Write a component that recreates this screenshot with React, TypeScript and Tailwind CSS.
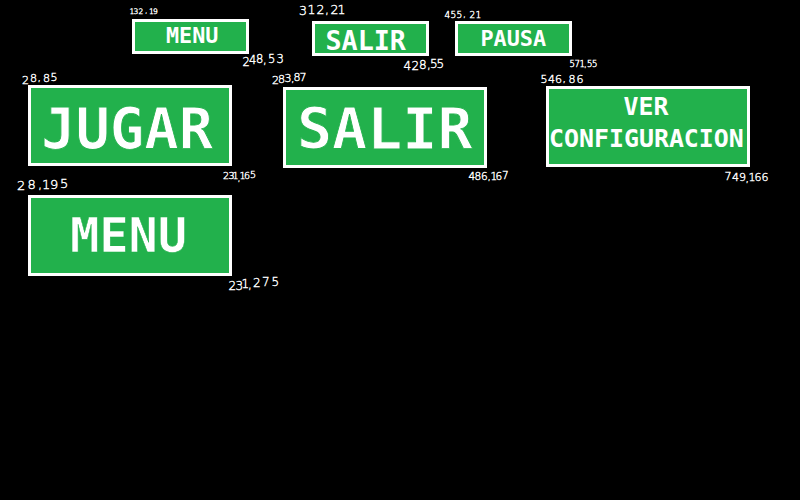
type Note = { text: string; size: number; x: number[]; y: number[] };

// Corner coordinates jotted next to every button, one position per character.
const notes: Note[] = [
  { text: "132,19", size: 7.5, x: [129.5, 133.5, 138.5, 145, 149, 153], y: [13.5, 13.5, 13.5, 13, 13.5, 13.5] },
  { text: "248,53", size: 11.5, x: [242.5, 249, 256, 263, 268, 276.5], y: [66, 63.5, 62.5, 64, 62.5, 62.5] },
  { text: "312,21", size: 12.5, x: [299, 307.5, 316.5, 325, 330.5, 337.5], y: [14.5, 13.5, 14, 14, 14, 14] },
  { text: "428,55", size: 12, x: [403.5, 411.5, 419, 427, 430, 436.5], y: [70, 69.5, 69, 69, 68, 68] },
  { text: "455,21", size: 9, x: [444.5, 450.5, 456.5, 463, 469.5, 475.5], y: [17.5, 18, 18, 17, 18, 18] },
  { text: "571,55", size: 8.5, x: [569.5, 574.5, 579.5, 584, 587, 592], y: [66.5, 67, 66.5, 67, 67, 66.5] },
  { text: "28,85", size: 11, x: [22, 30, 37.5, 43, 50.5], y: [83.5, 82, 81, 82, 80.5] },
  { text: "231,165", size: 9.5, x: [223, 228.5, 232.5, 237.5, 239.5, 244, 250], y: [178.5, 179, 179, 181, 179, 178.5, 178] },
  { text: "283,87", size: 11, x: [272, 278, 284.5, 291, 293.5, 299.5], y: [83.5, 82.5, 82, 82, 81, 81] },
  { text: "486,167", size: 10.5, x: [468.5, 474.5, 481, 487.5, 490.5, 495.5, 502], y: [179.5, 180, 180, 179.5, 180, 179.5, 179] },
  { text: "546,86", size: 11, x: [540.5, 548, 555, 562.5, 568.5, 576.5], y: [82.5, 82.5, 82.5, 82, 83, 82.5] },
  { text: "749,166", size: 11, x: [724.5, 732, 739, 745.5, 748.5, 754.5, 761.5], y: [180, 180.5, 181, 182, 181, 180.5, 180.5] },
  { text: "28,195", size: 13, x: [17, 27.5, 38, 42, 50, 60], y: [190, 189, 189, 188.5, 189, 188] },
  { text: "231,275", size: 12, x: [228.5, 235.5, 241.5, 248, 253, 262, 271.5], y: [290, 289.5, 288, 289, 286.5, 286, 285.5] },
];

const box = "shrink-0 border-[3px] border-white bg-[#22b14c] whitespace-nowrap";
const small = "h-[35px] w-[117px]";
const large = "h-[81px] w-[204px]";
const label = "block leading-none origin-[0_84.6%]";
const thinLarge = "[-webkit-text-stroke:0.9px_#22b14c]";

export default function App() {
  return (
    <main className="relative h-[500px] w-[800px] overflow-hidden bg-black font-['DejaVu_Sans_Mono',monospace] font-bold text-white">
      <div className="flex h-[85px] items-start pl-[132px] pt-[19px]">
        <button className={`${box} ${small} flex items-start pl-[31px] pt-[3px]`}>
          <span className={`${label} text-[21.8px]`}>MENU</span>
        </button>
        <button className={`${box} ${small} ml-[63px] mt-0.5 flex items-start pl-[10.5px] pt-[4px]`}>
          <span className={`${label} scale-y-[0.97] text-[26.7px]`}>SALIR</span>
        </button>
        <button className={`${box} ${small} ml-[26px] mt-0.5 flex items-start pl-[22.5px] pt-[4px]`}>
          <span className={`${label} text-[21.8px]`}>PAUSA</span>
        </button>
      </div>
      <div className="flex h-[110px] items-start pl-7">
        <button className={`${box} ${large} flex items-start pl-[10px] pt-[12.5px]`}>
          <span className={`${label} ${thinLarge} text-[57.2px]`}>JUGAR</span>
        </button>
        <button className={`${box} ${large} ml-[51px] mt-0.5 flex items-start pl-[11px] pt-[9.5px]`}>
          <span className={`${label} ${thinLarge} scale-y-[0.98] text-[58.3px]`}>SALIR</span>
        </button>
        <button className={`${box} ${large} ml-[59px] mt-px flex flex-col items-start gap-[7px] pt-[6px]`}>
          <span className={`${label} ml-[74.5px] text-[24.9px]`}>VER</span>
          <span className={`${label} text-[24.9px]`}>CONFIGURACION</span>
        </button>
      </div>
      <div className="flex items-start pl-7">
        <button className={`${box} ${large} flex items-start pl-[39px] pt-[13px]`}>
          <span className={`${label} scale-y-[0.99] [-webkit-text-stroke:0.5px_#22b14c] text-[48.6px]`}>MENU</span>
        </button>
      </div>
      <svg
        className="pointer-events-none absolute inset-0 [font-family:'DejaVu_Sans',sans-serif] font-extralight"
        width="800"
        height="500"
        fill="white"
        stroke="white"
        strokeWidth="0.4"
      >
        {notes.map((n) => (
          <text key={n.text} fontSize={n.size} x={n.x.join(" ")} y={n.y.join(" ")}>
            {n.text}
          </text>
        ))}
      </svg>
    </main>
  );
}
